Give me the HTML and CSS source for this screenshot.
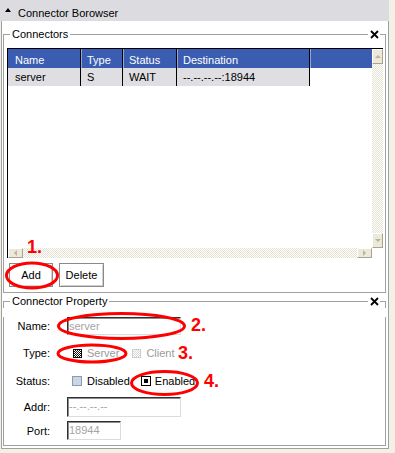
FILE: index.html
```html
<!DOCTYPE html>
<html lang="en">
<head>
  <meta charset="UTF-8" />
  <title>Connector Borowser</title>
  <link rel="stylesheet" href="styles.css">
</head>
<body>
  <div class="browser">
    <div class="titlebar"><span class="caret"></span>Connector Borowser</div>

    <div class="panel">
      <div class="group">
        <div class="group-head">
          <span class="group-title">Connectors</span>
          <span class="group-line"></span>
          <svg class="close" width="9" height="9" viewBox="0 0 9 9"><path d="M1 1L8 8M8 1L1 8" stroke="#000" stroke-width="1.8"/></svg>
        </div>
        <div class="group-body">
          <div class="scrollpane">
            <div class="viewport">
              <div class="grid-row grid-head">
                <div class="cell">Name</div>
                <div class="cell">Type</div>
                <div class="cell">Status</div>
                <div class="cell">Destination</div>
                <div class="cell filler"></div>
              </div>
              <div class="grid-row grid-data">
                <div class="cell">server</div>
                <div class="cell">S</div>
                <div class="cell">WAIT</div>
                <div class="cell">--.--.--.--:18944</div>
              </div>
            </div>
            <div class="vscroll">
              <span class="sb-btn sb-up"></span>
              <span class="track"></span>
              <span class="sb-btn sb-down"></span>
            </div>
            <div class="hscroll">
              <span class="sb-btn sb-left"></span>
              <span class="track"></span>
              <span class="sb-btn sb-right"></span>
            </div>
            <div class="corner"></div>
          </div>
          <div class="actions">
            <button class="btn btn-add">Add</button>
            <button class="btn btn-delete">Delete</button>
          </div>
        </div>
      </div>

      <div class="group group-prop">
        <div class="group-head">
          <span class="group-title">Connector Property</span>
          <span class="group-line"></span>
          <svg class="close" width="9" height="9" viewBox="0 0 9 9"><path d="M1 1L8 8M8 1L1 8" stroke="#000" stroke-width="1.8"/></svg>
        </div>
        <div class="group-body">
          <div class="prop-row">
            <label class="prop-label">Name:</label>
            <div class="field field-wide">server</div>
          </div>
          <div class="prop-row">
            <label class="prop-label">Type:</label>
            <div class="opts opts-type">
              <span class="opt"><span class="radio radio-on"></span>Server</span>
              <span class="opt"><span class="radio"></span>Client</span>
            </div>
          </div>
          <div class="prop-row row-status">
            <label class="prop-label">Status:</label>
            <div class="opts opts-status">
              <span class="opt opt-dark"><span class="check"></span>Disabled</span>
              <span class="opt opt-dark opt-tight"><span class="check check-on"><span class="dot"></span></span>Enabled</span>
            </div>
          </div>
          <div class="prop-row row-addr">
            <label class="prop-label">Addr:</label>
            <div class="field field-wide">--.--.--.--</div>
          </div>
          <div class="prop-row row-port">
            <label class="prop-label">Port:</label>
            <div class="field field-short">18944</div>
          </div>
        </div>
      </div>
    </div>

    <!-- red annotation marks drawn over the screenshot -->
    <svg class="marks" width="395" height="453" viewBox="0 0 395 453">
      <g fill="none" stroke="#f00" stroke-width="3">
        <ellipse cx="32" cy="275.5" rx="25.5" ry="12.5"/>
        <ellipse cx="121.5" cy="326" rx="63" ry="12.5"/>
        <ellipse cx="92" cy="353.5" rx="34" ry="8.5"/>
        <ellipse cx="164.5" cy="383" rx="33" ry="11.5"/>
      </g>
      <g class="mark-num">
        <text x="27" y="253">1.</text>
        <text x="191" y="331">2.</text>
        <text x="178" y="359">3.</text>
        <text x="204" y="387">4.</text>
      </g>
    </svg>
  </div>
</body>
</html>
```

FILE: styles.css
```css
body {
  margin: 0;
  background: #f3f1e6;
  font-family: "Liberation Sans", Arial, sans-serif;
  font-size: 11px;
  color: #000;
}
.browser {
  position: relative;
  width: 395px;
  height: 453px;
}
.titlebar {
  width: 389px;
  height: 21px;
  box-sizing: border-box;
  padding: 7px 0 0 5px;
  line-height: 13px;
  background: #dcdce0;
  display: flex;
}
.caret {
  width: 0;
  height: 0;
  margin: 1px 7px 0 0;
  border-left: 3.5px solid transparent;
  border-right: 3.5px solid transparent;
  border-bottom: 4px solid #000;
}
.panel {
  margin-left: 1px;
  width: 388px;
  box-sizing: border-box;
  border: 1px solid #a0a0a0;
  border-top: none;
  background: #fff;
  padding: 7px 2px 2px 1px;
}

/* titled group box */
.group-head {
  display: flex;
  height: 13px;
  line-height: 13px;
}
.group-head::before,
.group-head::after {
  content: "";
  align-self: flex-end;
  height: 6px;
  border-top: 1px solid #a0a0a0;
}
.group-head::before {
  width: 6px;
  border-left: 1px solid #a0a0a0;
}
.group-head::after {
  width: 5px;
  margin-left: 1px;
  border-right: 1px solid #a0a0a0;
}
.group-title {
  padding: 0 2px;
}
.group-line {
  flex: 1;
  align-self: flex-end;
  height: 6px;
  border-top: 1px solid #a0a0a0;
}
.close {
  margin: 2px 0 0 2px;
}
.group-body {
  border: 1px solid #a0a0a0;
  border-top: none;
  padding: 7px 2px 5px 3px;
}
.group-prop {
  margin-top: 2px;
}
.group-prop .group-body {
  padding: 0 2px 5px 3px;
}

/* table in scroll pane */
.scrollpane {
  width: 376px;
  height: 210px;
  box-sizing: border-box;
  border-top: 1px solid #000;
  border-left: 1px solid #000;
  display: grid;
  grid-template-columns: 364px 11px;
  grid-template-rows: 199px 10px;
}
.viewport {
  background: #fff;
  overflow: hidden;
}
.grid-row {
  display: grid;
  grid-template-columns: 73px 42px 54px 133px 1fr;
}
.cell {
  box-sizing: border-box;
  padding-left: 6px;
  border-right: 1px solid #000;
  white-space: nowrap;
}
.cell:first-child {
  padding-left: 7px;
}
.grid-head .cell {
  height: 19px;
  padding-top: 3px;
  line-height: 16px;
  background: #3a5db1;
  color: #fff;
  box-shadow: inset 1px 0 0 #8ea6dc;
}
.grid-head .cell:first-child {
  box-shadow: none;
}
.grid-head .filler {
  border-right: none;
}
.grid-data .cell {
  height: 18px;
  padding-top: 1px;
  line-height: 17px;
  background: #dfdfe3;
}
.vscroll,
.hscroll {
  display: flex;
}
.vscroll {
  flex-direction: column;
}
.track {
  flex: 1;
  background: repeating-conic-gradient(#e6e2d2 0 25%, #fff 0 50%) 0 0 / 2px 2px;
}
.sb-btn {
  box-sizing: border-box;
  background: #ece9d8;
  border-top: 1px solid #fff;
  border-left: 1px solid #fff;
  border-right: 1px solid #a7a390;
  border-bottom: 1px solid #a7a390;
  display: flex;
  align-items: center;
  justify-content: center;
}
.sb-up,
.sb-down {
  height: 15px;
}
.sb-left,
.sb-right {
  width: 15px;
}
.sb-btn::after {
  content: "";
  width: 0;
  height: 0;
}
.sb-up::after {
  border-left: 3px solid transparent;
  border-right: 3px solid transparent;
  border-bottom: 3px solid #b8b4a2;
}
.sb-down::after {
  border-left: 3px solid transparent;
  border-right: 3px solid transparent;
  border-top: 3px solid #b8b4a2;
}
.sb-left::after {
  border-top: 3px solid transparent;
  border-bottom: 3px solid transparent;
  border-right: 3px solid #b8b4a2;
}
.sb-right::after {
  border-top: 3px solid transparent;
  border-bottom: 3px solid transparent;
  border-left: 3px solid #b8b4a2;
}
.corner {
  background: #fff;
}

/* buttons */
.actions {
  display: flex;
  gap: 6px;
  margin-top: 5px;
  padding-left: 2px;
}
.btn {
  height: 24px;
  box-sizing: border-box;
  padding: 0;
  border: 1px solid #8a8a8a;
  box-shadow: inset 1px 1px 0 #fff, inset -1px -1px 0 #d0d0d0;
  background: #fff;
  font: inherit;
  color: #000;
}
.btn-add {
  width: 44px;
}
.btn-delete {
  width: 45px;
}

/* property form */
.prop-row {
  display: flex;
  align-items: center;
  height: 18px;
  margin-top: 9px;
  line-height: 18px;
}
.row-status {
  margin-top: 10px;
}
.row-addr {
  height: 20px;
  margin-top: 7px;
}
.row-port {
  height: 19px;
  margin-top: 4px;
}
.prop-label {
  width: 43px;
  margin-right: 17px;
  text-align: right;
}
.field {
  height: 100%;
  box-sizing: border-box;
  padding-left: 1px;
  border-top: 1px solid #303030;
  border-left: 1px solid #303030;
  border-right: 1px solid #dcdcdc;
  border-bottom: 1px solid #dcdcdc;
  box-shadow: inset 1px 1px 0 #8c8c8c;
  color: #a4a4a4;
  line-height: 16px;
}
.field-wide {
  width: 114px;
}
.field-short {
  width: 54px;
}
.opts {
  display: flex;
  align-items: center;
  color: #9a9a9a;
}
.opts-type {
  margin-left: 6px;
  gap: 13px;
}
.opts-status {
  margin-left: 5px;
  gap: 11px;
}
.opt {
  display: flex;
  align-items: center;
  gap: 5px;
}
.opt-dark {
  color: #000;
}
.opt-tight {
  gap: 4px;
}
.radio {
  width: 9px;
  height: 9px;
  box-sizing: border-box;
  border: 1px dotted #c4c4c4;
  background: repeating-conic-gradient(#d8d8d8 0 25%, #fff 0 50%) 0 0 / 2px 2px;
}
.radio-on {
  border-color: #000;
  background: repeating-conic-gradient(#111 0 25%, #fff 0 50%) 0 0 / 2px 2px;
}
.check {
  width: 10px;
  height: 10px;
  box-sizing: border-box;
  border: 1px solid #8a9ab0;
  background: #cbd6e5;
}
.check-on {
  border-color: #000;
  background: #fff;
  padding: 2px;
}
.dot {
  display: block;
  width: 4px;
  height: 4px;
  background: #000;
}

.marks {
  position: absolute;
  left: 0;
  top: 0;
  pointer-events: none;
}
.mark-num {
  fill: #f00;
  font-family: "Liberation Sans", Arial, sans-serif;
  font-size: 18px;
  font-weight: bold;
}
```
